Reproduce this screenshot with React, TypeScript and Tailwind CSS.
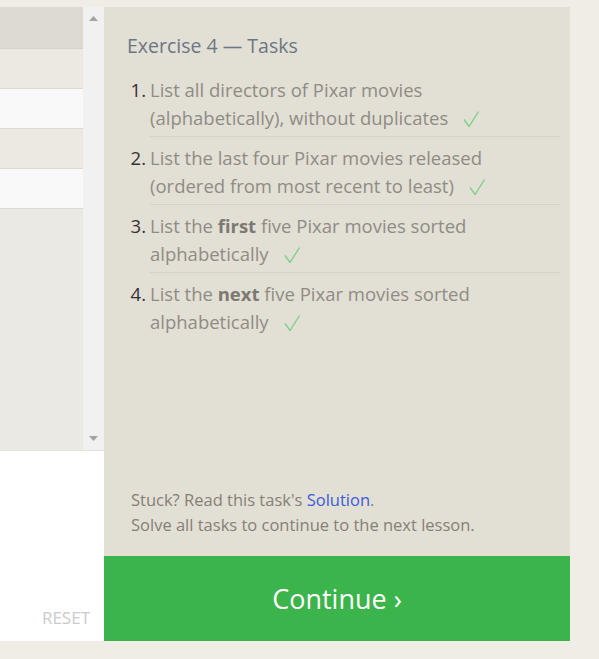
import React from "react";

/* ------------------------------------------------------------------ */
/*  Task list data                                                     */
/* ------------------------------------------------------------------ */

const TASKS: { id: number; before: string; bold?: string; after: string }[] = [
  {
    id: 1,
    before: "List all directors of Pixar movies (alphabetically), without duplicates",
    after: "",
  },
  {
    id: 2,
    before: "List the last four Pixar movies released (ordered from most recent to least)",
    after: "",
  },
  { id: 3, before: "List the ", bold: "first", after: " five Pixar movies sorted alphabetically" },
  { id: 4, before: "List the ", bold: "next", after: " five Pixar movies sorted alphabetically" },
];

const ROWS = ["bg-[#ebe9e2]", "bg-[#f9f9f9]", "bg-[#ebe9e2]", "bg-[#f9f9f9]"];

function Check() {
  return (
    <svg
      className="ml-[15px] inline-block align-[-2px]"
      width="16"
      height="16"
      viewBox="0 0 16 16"
      fill="none"
      stroke="#7ccf8a"
      strokeWidth="1.3"
    >
      <path d="M1 8.5 L6 15.5 L15.5 0.5" />
    </svg>
  );
}

export default function App() {
  return (
    <div
      className="min-h-screen bg-[#f0ede6] pt-[7px] pb-[18px]"
      style={{ fontFamily: '"Open Sans", "Noto Sans", sans-serif' }}
    >
      <div className="flex">
        {/* Left: query results table + editor */}
        <div className="flex h-[634px] w-[104px] flex-col">
          <div className="flex h-[443px] bg-[#ebe9e3]">
            <div className="flex flex-1 flex-col">
              <div className="h-[42px] border-b border-[#d6d4ca] bg-[#dddbd1]" />
              {ROWS.map((bg, i) => (
                <div key={i} className={`h-[40px] border-b border-[#dcdad2] ${bg}`} />
              ))}
            </div>
            <div className="flex w-[21px] flex-col items-center justify-between bg-[#f1f1f1] pt-[9px] pb-[9px]">
              <svg width="9" height="5" viewBox="0 0 9 5">
                <path d="M0 5 L4.5 0 L9 5 Z" fill="#a3a3a3" />
              </svg>
              <svg width="9" height="5" viewBox="0 0 9 5">
                <path d="M0 0 L9 0 L4.5 5 Z" fill="#a3a3a3" />
              </svg>
            </div>
          </div>
          <div className="flex flex-1 items-end justify-end border-t border-[#e5e3dc] bg-white pr-[14px] pb-[11px]">
            <span className="text-[17px] text-[#cbcbcb]">RESET</span>
          </div>
        </div>

        {/* Right: tasks panel */}
        <div className="flex h-[634px] w-[466px] flex-col bg-[#e2dfd5]">
          <div className="flex-1 pt-[26px] pr-[10px] pl-[23px]">
            <h2 className="text-[19.5px] leading-[26px] text-[#6c7783]">
              Exercise 4 — Tasks
            </h2>
            <ol className="mt-[17px]">
              {TASKS.map((t, i) => (
                <li key={t.id} className="flex">
                  <span className="w-[19px] shrink-0 text-right text-[18.5px] leading-[28px] text-[#333333]">
                    {t.id}.
                  </span>
                  <div
                    className={`ml-[4px] flex-1 pr-[50px] text-[18.5px] leading-[28px] text-[#8f8c84] ${
                      i < TASKS.length - 1
                        ? "mb-[7px] border-b border-[#d5d2c8] pb-[4px]"
                        : ""
                    }`}
                  >
                    {t.before}
                    {t.bold && <b className="font-bold text-[#7c7972]">{t.bold}</b>}
                    {t.after}
                    <Check />
                  </div>
                </li>
              ))}
            </ol>
          </div>
          <div className="px-[27px] pb-[19px] text-[16.5px] leading-[25px] text-[#857f75]">
            <p>
              Stuck? Read this task's <span className="text-[#3b5bdb]">Solution</span>.
            </p>
            <p>Solve all tasks to continue to the next lesson.</p>
          </div>
          <button className="h-[85px] w-full bg-[#3bb44b] pt-[2px] text-[27px] text-white">
            Continue ›
          </button>
        </div>
      </div>
    </div>
  );
}
